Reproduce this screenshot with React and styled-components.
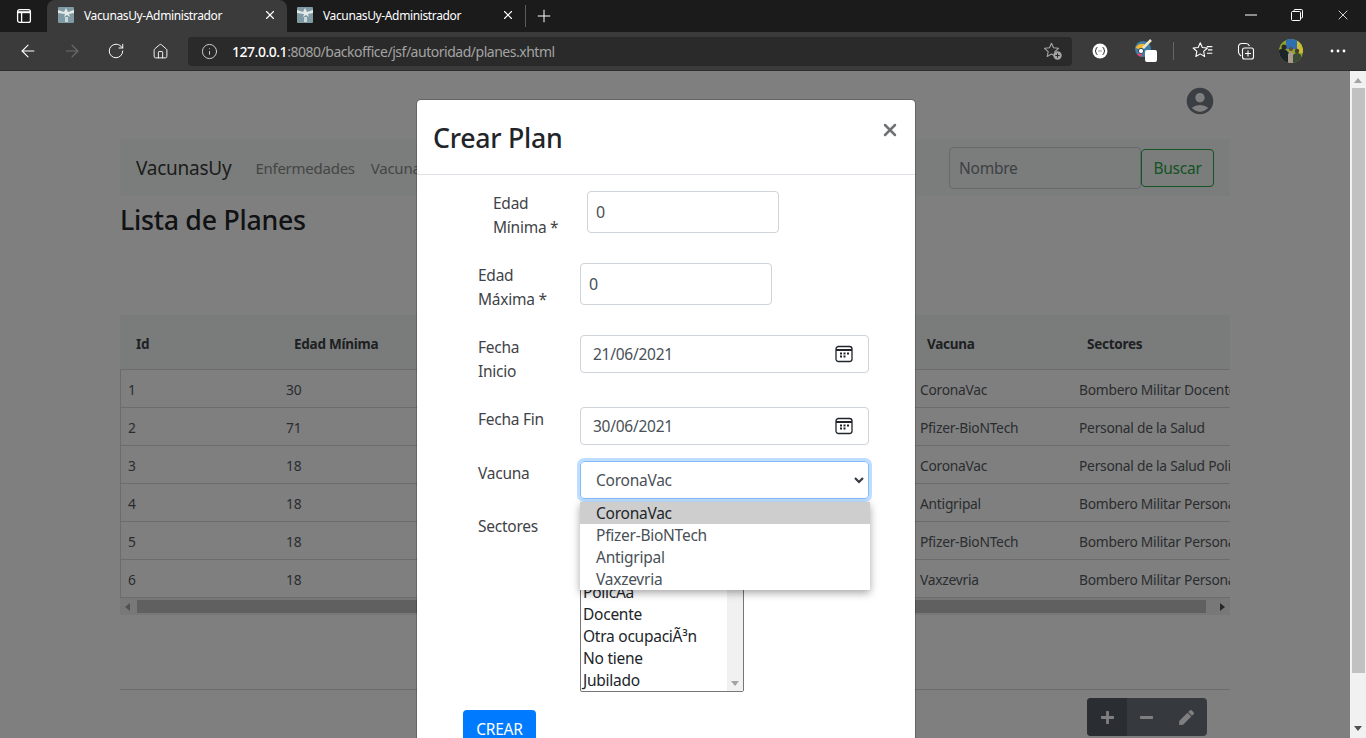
import React from 'react';
import styled, { createGlobalStyle } from 'styled-components';
import { ArrowLeft, ArrowRight, RotateCw, Home, Info, X, Plus } from 'lucide-react';
import { MdAccountCircle } from 'react-icons/md';
import { FaPen, FaPlus, FaMinus } from 'react-icons/fa';

const UI_FONT = `"Noto Sans", "Open Sans", sans-serif`;

const Global = createGlobalStyle`
	html, body {
		margin: 0;
		height: 738px;
		overflow: hidden;
		background: #fff;
		font-family: ${UI_FONT};
		letter-spacing: -0.25px;
	}
	* { box-sizing: border-box; }
`;

const Shell = styled.div`
	width: 1366px;
	height: 738px;
	display: flex;
	flex-direction: column;
	overflow: hidden;
`;

/* browser chrome */
const TabBar = styled.div`
	height: 32px;
	flex: none;
	display: flex;
	align-items: flex-end;
	background: #1b1b1b;
	color: #fff;
`;
const SideToggle = styled.div`
	width: 47px;
	height: 32px;
	display: flex;
	align-items: center;
	justify-content: center;
`;
const Tab = styled.div`
	width: ${(p) => p.$width}px;
	height: 32px;
	padding: 0 10px 2px ${(p) => (p.$active ? 11 : 10)}px;
	display: flex;
	align-items: center;
	font-size: 12px;
	letter-spacing: -0.37px;
	border-radius: 8px 8px 0 0;
	background: ${(p) => (p.$active ? '#3b3b3b' : 'transparent')};
	span { flex: 1; margin-left: 10px; white-space: nowrap; }
`;
const TabDivider = styled.div`
	width: 1px;
	height: 22px;
	margin: 0 0 5px 0;
	background: #5c5c5c;
`;
const NewTab = styled.div`
	width: 36px;
	height: 32px;
	display: flex;
	align-items: center;
	justify-content: center;
`;
const WindowControls = styled.div`
	margin-left: auto;
	height: 32px;
	display: flex;
`;
const WindowButton = styled.div`
	width: 46px;
	height: 30px;
	display: flex;
	align-items: center;
	justify-content: center;
`;
const Toolbar = styled.div`
	height: 39px;
	flex: none;
	display: flex;
	align-items: center;
	padding-left: 6px;
	background: #3b3b3b;
	border-bottom: 1px solid #2e2e2e;
	color: #fff;
`;
const ToolButton = styled.div`
	width: ${(p) => p.$width || 44}px;
	height: 30px;
	flex: none;
	display: flex;
	align-items: center;
	justify-content: center;
	padding-left: ${(p) => p.$pad || 0}px;
	color: ${(p) => (p.$dim ? '#6f6f6f' : '#fff')};
`;
const AddressBar = styled.div`
	width: 884px;
	height: 29px;
	flex: none;
	margin: 0 6px 0 6px;
	padding: 0 9px 0 13px;
	display: flex;
	align-items: center;
	border-radius: 4px;
	background: #2a2a2a;
	font-size: 14px;
	color: #a3a3a3;
	b { font-weight: 500; color: #fff; }
`;
const Url = styled.div`
	flex: 1;
	margin-left: 14px;
	letter-spacing: -0.48px;
`;
const ToolDivider = styled.div`
	width: 1px;
	height: 18px;
	flex: none;
	margin: 0 7px 0 7px;
	background: #666;
`;

/* page under the modal */
const Viewport = styled.div`
	flex: 1;
	min-height: 0;
	display: flex;
`;
const PageArea = styled.div`
	position: relative;
	flex: 1;
	overflow: hidden;
	background: #fff;
	color: #2f3439;
`;
const Container = styled.div`
	width: 1140px;
	margin: 0 auto;
	padding: 0 15px;
`;
const ProfileRow = styled.div`
	height: 68px;
	padding: 14px 14px 0 0;
	display: flex;
	justify-content: flex-end;
	color: #767d85;
`;
const NavBar = styled.div`
	height: 57px;
	padding: 0 16px;
	display: flex;
	align-items: center;
	background: #f6faf8;
`;
const Brand = styled.div`
	font-size: 19px;
	color: #3a3a3a;
	margin-right: 24px;
`;
const NavLink = styled.div`
	font-size: 15px;
	color: #8a8a8a;
	margin-right: 16px;
`;
const SearchForm = styled.div`
	margin-left: auto;
	display: flex;
	align-items: center;
`;
const SearchInput = styled.div`
	width: 192px;
	height: 42px;
	padding: 0 9px;
	display: flex;
	align-items: center;
	border: 1px solid #ced4da;
	border-radius: 4px;
	color: #7a8289;
	font-size: 15.5px;
`;
const SearchButton = styled.div`
	width: 73px;
	height: 38px;
	display: flex;
	align-items: center;
	justify-content: center;
	border: 1px solid #28a745;
	border-radius: 4px;
	color: #28a745;
	font-size: 15.5px;
`;
const PageTitle = styled.h2`
	margin: 7px 0 0;
	height: 42px;
	font-size: 26.7px;
	line-height: 34px;
	font-weight: 500;
	color: #212529;
`;
const TableWrap = styled.div`
	margin-top: 70px;
	width: 1110px;
	overflow: hidden;
`;
const TableRow = styled.div`
	display: grid;
	grid-template-columns: ${(p) => (p.$head ? '158px 633px 160px 159px' : '158px 634px 159px 159px')};
	height: ${(p) => (p.$head ? 55 : 38)}px;
	padding-top: ${(p) => (p.$head ? 3 : 2)}px;
	align-items: center;
	background: ${(p) => (p.$head ? '#f3f8f6' : 'transparent')};
	border-bottom: 1px solid #d4d8dc;
	border-left: ${(p) => (p.$head ? 'none' : '1px solid #d4d8dc')};
	white-space: nowrap;
`;
const HeadCell = styled.div`
	padding-left: 16px;
	font-size: 13.5px;
	font-weight: 700;
	color: #3c4146;
`;
const Cell = styled.div`
	padding-left: 7px;
	font-size: 13.8px;
	overflow: hidden;
	color: #555a60;
`;
const HScroll = styled.div`
	height: 17px;
	display: flex;
	align-items: center;
	background: #f1f1f1;
`;
const HThumb = styled.div`
	flex: 1;
	height: 13px;
	margin: 0 14px 0 1px;
	background: #c1c1c1;
`;
const Arrow = styled.div`
	width: 0;
	height: 0;
	flex: none;
	border-style: solid;
	border-color: transparent;
	${(p) => p.$dir === 'left' && `border-width: 4px 5px 4px 0; border-right-color: ${p.$color}; margin: 0 6px 0 5px;`}
	${(p) => p.$dir === 'right' && `border-width: 4px 0 4px 5px; border-left-color: ${p.$color}; margin: 0 5px 0 0;`}
	${(p) => p.$dir === 'up' && `border-width: 0 4px 5px 4px; border-bottom-color: ${p.$color};`}
	${(p) => p.$dir === 'down' && `border-width: 5px 4px 0 4px; border-top-color: ${p.$color};`}
`;
const FooterRule = styled.div`
	margin-top: 74px;
	border-top: 1px solid #d4d8dc;
`;
const ActionGroup = styled.div`
	margin: 8px 23px 0 auto;
	width: 120px;
	height: 38px;
	display: flex;
	border-radius: 4px;
	overflow: hidden;
	background: #6c757d;
	color: #fff;
`;
const ActionButton = styled.div`
	width: 40px;
	display: flex;
	align-items: center;
	justify-content: center;
	padding-right: ${(p) => (p.$active ? 0 : 2)}px;
	background: ${(p) => (p.$active ? '#545b62' : 'transparent')};
`;

/* page scrollbar */
const VScroll = styled.div`
	width: 16px;
	flex: none;
	display: flex;
	flex-direction: column;
	align-items: center;
	background: #f1f1f1;
	padding: 7px 0 7px;
`;
const VThumb = styled.div`
	width: 13px;
	height: 585px;
	margin: 5px 0 auto;
	background: #c1c1c1;
`;

/* modal */
const Backdrop = styled.div`
	position: absolute;
	inset: 0;
	background: rgba(0, 0, 0, 0.5);
`;
const Modal = styled.div`
	position: absolute;
	top: 28px;
	left: 416px;
	width: 500px;
	height: 700px;
	background: #fff;
	border: 1px solid rgba(0, 0, 0, 0.2);
	border-radius: 5px;
	background-clip: padding-box;
	color: #212529;
`;
const ModalHeader = styled.div`
	height: 75px;
	padding: 16px;
	display: flex;
	justify-content: space-between;
	border-bottom: 1px solid #dee2e6;
`;
const ModalTitle = styled.h3`
	margin: 0;
	font-size: 26.7px;
	line-height: 44px;
	font-weight: 500;
`;
const CloseButton = styled.div`
	margin: 0 -1px 0 0;
	height: 30px;
	padding-top: 4px;
	color: #6f7376;
`;
const ModalBody = styled.div`
	padding-top: 16px;
`;
const FormRow = styled.div`
	display: flex;
	align-items: flex-start;
	margin-top: ${(p) => p.$lift || 0}px;
	margin-bottom: 16px;
	padding-left: ${(p) => p.$indent}px;
`;
const FieldLabel = styled.label`
	flex: none;
	width: ${(p) => p.$width}px;
	padding-right: ${(p) => p.$width - 80}px;
	margin-bottom: 8px;
	font-size: 15.5px;
	line-height: 24px;
	color: #3f4347;
`;
const NumberInput = styled.div`
	width: 192px;
	height: 42px;
	padding: 0 8px;
	display: flex;
	align-items: center;
	border: 1px solid #ced4da;
	border-radius: 4px;
	color: #495057;
	font-size: 16px;
`;
const DateInput = styled.div`
	width: 289px;
	height: 38px;
	padding: 0 15px 0 12px;
	display: flex;
	align-items: center;
	justify-content: space-between;
	border: 1px solid #ced4da;
	border-radius: 4px;
	color: #495057;
	font-size: 15.5px;
`;
const SelectWrap = styled.div`
	position: relative;
`;
const SelectBox = styled.div`
	width: 289px;
	height: 38px;
	padding: 0 3px 0 15px;
	display: flex;
	align-items: center;
	justify-content: space-between;
	border: 1px solid #80bdff;
	border-radius: 4px;
	box-shadow: 0 0 0 3px rgba(0, 123, 255, 0.25);
	color: #495057;
	font-size: 15.5px;
`;
const OptionList = styled.div`
	position: absolute;
	z-index: 2;
	top: 41px;
	left: 0;
	width: 290px;
	background: #fff;
	box-shadow: 0 3px 8px rgba(0, 0, 0, 0.35);
`;
const Option = styled.div`
	height: 22px;
	padding-left: 16px;
	font-size: 15.5px;
	line-height: 22px;
	color: ${(p) => (p.$selected ? '#212529' : '#495057')};
	background: ${(p) => (p.$selected ? '#cecece' : 'transparent')};
`;
const ListBox = styled.div`
	position: relative;
	width: 164px;
	height: 178px;
	padding-left: 2px;
	border: 1px solid #767676;
	border-radius: 2px;
	overflow: hidden;
	font-size: 15.5px;
	color: #212529;
`;
const ListItem = styled.div`
	height: 22px;
	line-height: 22px;
	white-space: nowrap;
`;
const ListTrack = styled.div`
	position: absolute;
	top: 0;
	right: 0;
	bottom: 0;
	width: 16px;
	padding-bottom: 5px;
	display: flex;
	flex-direction: column;
	justify-content: flex-end;
	align-items: center;
	background: #f1f1f1;
`;
const SubmitButton = styled.div`
	width: 73px;
	height: 38px;
	margin: 18px 0 0 46px;
	display: flex;
	align-items: center;
	justify-content: center;
	border-radius: 4px;
	background: #007bff;
	color: #fff;
	font-size: 15.5px;
`;

const Favicon = () => (
	<svg width="16" height="16" viewBox="0 0 16 16">
		<rect width="16" height="16" rx="1" fill="#7f9aa3" />
		<path d="M0 3l6 2 2-4 2 4 6-2v3l-5 1 1 3-3-2-3 2 1-3-7-1z" fill="#e4e9ea" />
		<path d="M7 10h3v5H7z" fill="#c9d6da" />
	</svg>
);

const SidebarIcon = () => (
	<svg width="16" height="16" viewBox="0 0 16 16" fill="none" stroke="#fff" strokeWidth="1.3">
		<rect x="1.6" y="1.6" width="12.8" height="12.8" rx="2" />
		<path d="M1.6 4.2h12.8" strokeWidth="2" />
		<path d="M5.6 4v10" />
	</svg>
);

const RestoreIcon = () => (
	<svg width="12" height="12" viewBox="0 0 12 12" fill="none" stroke="#fff" strokeWidth="1">
		<rect x="0.5" y="2.5" width="9" height="9" rx="1" />
		<path d="M3 2.5V1.5a1 1 0 0 1 1-1h6.5a1 1 0 0 1 1 1V8a1 1 0 0 1-1 1H9.5" />
	</svg>
);

const MinimizeIcon = () => (
	<svg width="12" height="2" viewBox="0 0 12 2">
		<path d="M0 1h12" stroke="#fff" />
	</svg>
);

const StarPlusIcon = () => (
	<svg width="20" height="20" viewBox="0 0 20 20" fill="none">
		<path d="M8.5 2.2l2 4.6 5 .5-3.7 3.3 1 4.9-4.3-2.5-4.3 2.5 1-4.9L1.5 7.3l5-.5z" stroke="#a5a5a5" strokeWidth="1.1" strokeLinejoin="round" />
		<circle cx="14.5" cy="14.5" r="4.2" fill="#a5a5a5" />
		<path d="M14.5 12.3v4.4M12.3 14.5h4.4" stroke="#2a2a2a" strokeWidth="1" />
	</svg>
);

const BracketIcon = () => (
	<svg width="16" height="16" viewBox="0 0 16 16">
		<circle cx="8" cy="8" r="7.5" fill="#fff" />
		<path d="M5.5 4.5Q4 4.5 4 6v1.2L3 8l1 .8V10q0 1.5 1.5 1.5M10.5 4.5Q12 4.5 12 6v1.2L13 8l-1 .8V10q0 1.5-1.5 1.5" fill="none" stroke="#333" strokeWidth="1" />
		<path d="M6.5 8h3" stroke="#333" strokeWidth="1" strokeDasharray="1 1" />
	</svg>
);

const PaletteIcon = () => (
	<svg width="24" height="24" viewBox="0 0 24 24">
		<circle cx="9" cy="10" r="8" fill="#3f7fa6" />
		<path d="M1.5 9a8 8 0 0 1 9-4l-2 6z" fill="#f2b632" />
		<path d="M3 15a8 8 0 0 0 4 3l2-5z" fill="#e8447a" />
		<circle cx="7" cy="12" r="2.6" fill="#fff" stroke="#2b4a5e" />
		<path d="M9 9l8-8" stroke="#f3e7c8" strokeWidth="2.5" />
		<rect x="11" y="11" width="12" height="12" rx="2" fill="#fff" />
	</svg>
);

const FavoritesIcon = () => (
	<svg width="22" height="22" viewBox="0 0 20 20" fill="none" stroke="#fff" strokeWidth="1" strokeLinejoin="round">
		<path d="M7.5 2.5l1.9 4.3 4.6.5-3.4 3.1.9 4.6-4-2.4-4 2.4.9-4.6L1 7.3l4.600-.5z" />
		<path d="M13.500 6h5M14.500 9h4M13.500 12h5" />
	</svg>
);

const CollectionsIcon = () => (
	<svg width="18" height="18" viewBox="0 0 18 18" fill="none" stroke="#fff" strokeWidth="1.1">
		<rect x="5.5" y="6" width="11" height="11" rx="2" />
		<path d="M11 8.5v6M8 11.5h6" />
		<path d="M4 14Q1.5 12 1.5 10V4.5a3 3 0 0 1 3-3H9q2.5 0 3.500 2.5" />
	</svg>
);

const Avatar = () => (
	<svg width="24" height="24" viewBox="0 0 24 24">
		<defs>
			<clipPath id="avatarClip"><circle cx="12" cy="12" r="12" /></clipPath>
		</defs>
		<g clipPath="url(#avatarClip)">
			<rect width="24" height="24" fill="#8aa52c" />
			<path d="M7 0h11v10H7z" fill="#2f6fb0" />
			<path d="M18 0h6v14h-6z" fill="#c9bd35" />
			<path d="M0 24V11q4-3 7 0l3 3v10z" fill="#1c2428" />
			<path d="M9 24v-9l3-3 3 3v9z" fill="#a99a8e" />
			<path d="M14 24v-8q4-4 8 0v8z" fill="#3a4a34" />
			<circle cx="5" cy="8" r="2.5" fill="#2d2622" />
			<circle cx="12" cy="10" r="2" fill="#6b4a39" />
			<circle cx="18" cy="12" r="2.2" fill="#4a3a2e" />
		</g>
	</svg>
);

const MoreIcon = () => (
	<svg width="16" height="4" viewBox="0 0 16 4" fill="#fff">
		<circle cx="2" cy="2" r="1.4" /><circle cx="8" cy="2" r="1.4" /><circle cx="14" cy="2" r="1.4" />
	</svg>
);

const CalendarIcon = () => (
	<svg width="18" height="18" viewBox="0 0 18 18" fill="none" stroke="#212529">
		<rect x="1" y="1.5" width="16" height="15" rx="2.5" strokeWidth="1.3" />
		<path d="M1 5h16" strokeWidth="2" />
		<path d="M5 8.5h2M8.5 8.5h2M12 8.5h2M5 11.500h2M8.500 11.500h2" strokeWidth="2" />
	</svg>
);

const Chevron = () => (
	<svg width="12" height="12" viewBox="0 0 12 12" fill="none" stroke="#343a40" strokeWidth="2.2">
		<path d="M2 4l4 4 4-4" />
	</svg>
);

const rows = [
	['1', '30', 'CoronaVac', 'Bombero Militar Docente'],
	['2', '71', 'Pfizer-BioNTech', 'Personal de la Salud'],
	['3', '18', 'CoronaVac', 'Personal de la Salud Policía'],
	['4', '18', 'Antigripal', 'Bombero Militar Personal de la Salud'],
	['5', '18', 'Pfizer-BioNTech', 'Bombero Militar Personal de la Salud'],
	['6', '18', 'Vaxzevria', 'Bombero Militar Personal de la Salud'],
];
const vacunas = ['CoronaVac', 'Pfizer-BioNTech', 'Antigripal', 'Vaxzevria'];
const sectores = ['Personal de la Salud', 'Militar', 'Bombero', 'PolicÃ\u00ada', 'Docente', 'Otra ocupaciÃ³n', 'No tiene', 'Jubilado'];

export default function App() {
	return (
		<Shell>
			<Global />
			<TabBar>
				<SideToggle><SidebarIcon /></SideToggle>
				<Tab $width={240} $active>
					<Favicon /><span>VacunasUy-Administrador</span><X size={14} />
				</Tab>
				<Tab $width={238}>
					<Favicon /><span>VacunasUy-Administrador</span><X size={14} />
				</Tab>
				<TabDivider />
				<NewTab><Plus size={20} strokeWidth={1.2} /></NewTab>
				<WindowControls>
					<WindowButton><MinimizeIcon /></WindowButton>
					<WindowButton><RestoreIcon /></WindowButton>
					<WindowButton><X size={16} strokeWidth={1.2} /></WindowButton>
				</WindowControls>
			</TabBar>
			<Toolbar>
				<ToolButton><ArrowLeft size={20} strokeWidth={1.3} /></ToolButton>
				<ToolButton $dim><ArrowRight size={20} strokeWidth={1.3} /></ToolButton>
				<ToolButton><RotateCw size={18} strokeWidth={1.3} /></ToolButton>
				<ToolButton><Home size={17} strokeWidth={1.3} /></ToolButton>
				<AddressBar>
					<Info size={17} strokeWidth={1.3} color="#d8d8d8" />
					<Url><b>127.0.0.1</b>:8080/backoffice/jsf/autoridad/planes.xhtml</Url>
					<StarPlusIcon />
				</AddressBar>
				<ToolButton><BracketIcon /></ToolButton>
				<ToolButton $pad={4}><PaletteIcon /></ToolButton>
				<ToolDivider />
				<ToolButton $width={43}><FavoritesIcon /></ToolButton>
				<ToolButton><CollectionsIcon /></ToolButton>
				<ToolButton $width={46}><Avatar /></ToolButton>
				<ToolButton $width={48}><MoreIcon /></ToolButton>
			</Toolbar>
			<Viewport>
				<PageArea>
					<Container>
						<ProfileRow><MdAccountCircle size={32} /></ProfileRow>
						<NavBar>
							<Brand>VacunasUy</Brand>
							<NavLink>Enfermedades</NavLink>
							<NavLink>Vacunas</NavLink>
							<SearchForm>
								<SearchInput>Nombre</SearchInput>
								<SearchButton>Buscar</SearchButton>
							</SearchForm>
						</NavBar>
						<PageTitle>Lista de Planes</PageTitle>
						<TableWrap>
							<TableRow $head>
								<HeadCell>Id</HeadCell>
								<HeadCell>Edad Mínima</HeadCell>
								<HeadCell>Vacuna</HeadCell>
								<HeadCell>Sectores</HeadCell>
							</TableRow>
							{rows.map((r) => (
								<TableRow key={r[0]}>
									<Cell>{r[0]}</Cell>
									<Cell>{r[1]}</Cell>
									<Cell>{r[2]}</Cell>
									<Cell>{r[3]}</Cell>
								</TableRow>
							))}
							<HScroll>
								<Arrow $dir="left" $color="#a3a3a3" />
								<HThumb />
								<Arrow $dir="right" $color="#505050" />
							</HScroll>
						</TableWrap>
						<FooterRule />
						<ActionGroup>
							<ActionButton $active><FaPlus size={15} /></ActionButton>
							<ActionButton><FaMinus size={15} /></ActionButton>
							<ActionButton><FaPen size={15} /></ActionButton>
						</ActionGroup>
					</Container>
					<Backdrop />
					<Modal>
						<ModalHeader>
							<ModalTitle>Crear Plan</ModalTitle>
							<CloseButton><X size={20} strokeWidth={3} /></CloseButton>
						</ModalHeader>
						<ModalBody>
							<FormRow $indent={76}>
								<FieldLabel $width={94}>Edad Mínima *</FieldLabel>
								<NumberInput>0</NumberInput>
							</FormRow>
							<FormRow $indent={61}>
								<FieldLabel $width={102}>Edad Máxima *</FieldLabel>
								<NumberInput>0</NumberInput>
							</FormRow>
							<FormRow $indent={61}>
								<FieldLabel $width={102}>Fecha Inicio</FieldLabel>
								<DateInput>21/06/2021<CalendarIcon /></DateInput>
							</FormRow>
							<FormRow $indent={61}>
								<FieldLabel $width={102}>Fecha Fin</FieldLabel>
								<DateInput>30/06/2021<CalendarIcon /></DateInput>
							</FormRow>
							<FormRow $indent={61}>
								<FieldLabel $width={102}>Vacuna</FieldLabel>
								<SelectWrap>
									<SelectBox>CoronaVac<Chevron /></SelectBox>
									<OptionList>
										{vacunas.map((v, i) => (
											<Option key={v} $selected={i === 0}>{v}</Option>
										))}
									</OptionList>
								</SelectWrap>
							</FormRow>
							<FormRow $indent={61} $lift={-1}>
								<FieldLabel $width={102}>Sectores</FieldLabel>
								<ListBox>
									{sectores.map((s) => <ListItem key={s}>{s}</ListItem>)}
									<ListTrack><Arrow $dir="down" $color="#a3a3a3" /></ListTrack>
								</ListBox>
							</FormRow>
							<SubmitButton>CREAR</SubmitButton>
						</ModalBody>
					</Modal>
				</PageArea>
				<VScroll>
					<Arrow $dir="up" $color="#a3a3a3" />
					<VThumb />
					<Arrow $dir="down" $color="#505050" />
				</VScroll>
			</Viewport>
		</Shell>
	);
}
